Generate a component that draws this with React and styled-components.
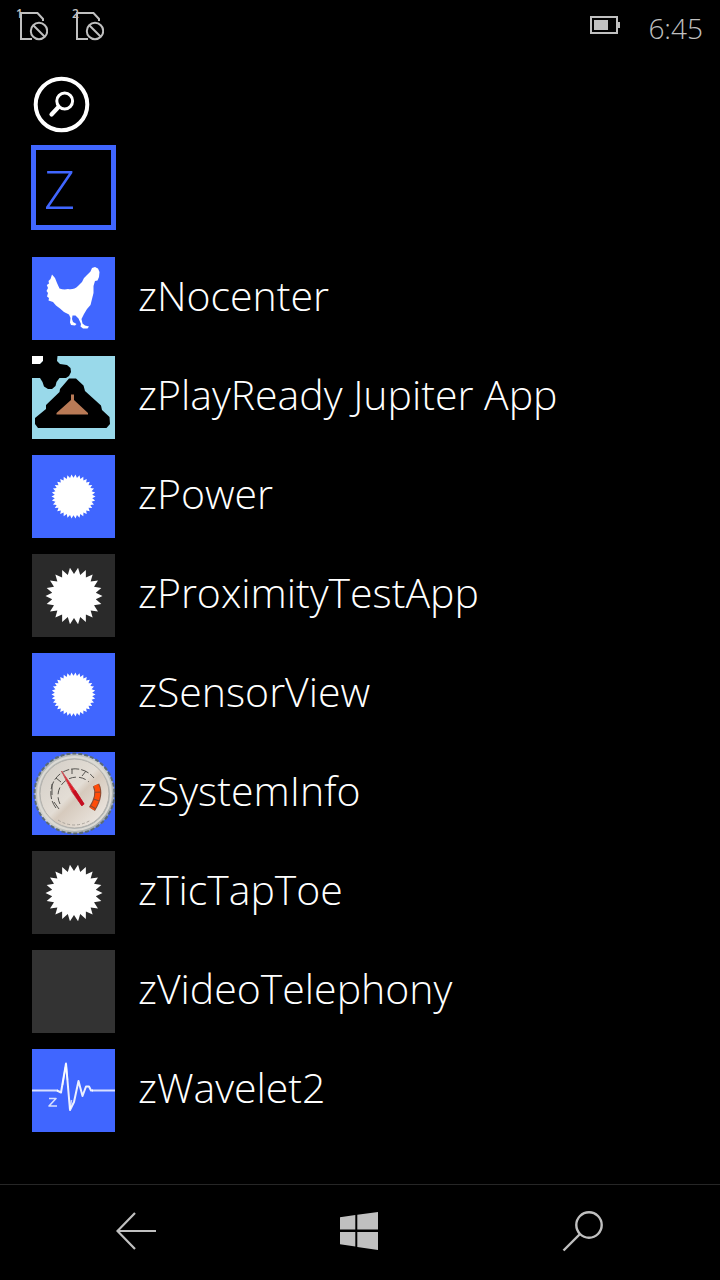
import React from "react";
import styled, { createGlobalStyle } from "styled-components";

const accent = "#4066ff";
const chrome = "#c0c0c0";

const GlobalStyle = createGlobalStyle`
  * { box-sizing: border-box; }
  body {
    margin: 0;
    background: #000;
    color: #fff;
    font-family: "Open Sans", "Noto Sans", sans-serif;
    font-weight: 340;
  }
  button {
    margin: 0;
    padding: 0;
    border: 0;
    background: none;
    color: inherit;
    font: inherit;
    cursor: pointer;
  }
  svg { display: block; }
`;

const Screen = styled.div`
  min-height: 100vh;
  display: flex;
  flex-direction: column;
`;

const StatusBar = styled.header`
  display: flex;
  align-items: flex-start;
  justify-content: space-between;
  height: 60px;
  padding: 8px 17px 0 16px;
  color: ${chrome};
`;

const StatusGroup = styled.div`
  display: flex;
  align-items: flex-start;
  gap: ${(p) => p.$gap}px;
`;

const Sim = styled.div`
  display: grid;
  width: 32px;
  height: 36px;
  > * { grid-area: 1 / 1; }
`;

const SimNumber = styled.span`
  font-size: 12px;
  line-height: 11px;
  font-weight: 600;
`;

const BatteryBox = styled.div`
  padding-top: 8px;
`;

const Clock = styled.time`
  font-size: 28px;
  line-height: 40px;
`;

const Main = styled.main`
  flex: 1;
  display: flex;
  flex-direction: column;
  align-items: flex-start;
  padding: 16px 32px 52px;
`;

const SearchButton = styled.button`
  width: 60px;
  height: 58px;
`;

const LetterButton = styled.button`
  width: 85px;
  height: 85px;
  margin: 11px 0 27px -1px;
  padding-left: 8px;
  border: 5px solid ${accent};
  color: ${accent};
  font-size: 54px;
  line-height: 76px;
  text-align: left;
`;

const AppList = styled.ul`
  display: flex;
  flex-direction: column;
  gap: 16px;
  width: 100%;
  margin: 0;
  padding: 0;
  list-style: none;
`;

const AppButton = styled.button`
  display: flex;
  align-items: center;
  gap: 23px;
  width: 100%;
  text-align: left;
`;

const Tile = styled.span`
  flex: none;
  width: 83px;
  height: 83px;
  background: ${(p) => p.$color};
`;

const AppName = styled.span`
  padding-bottom: 8px;
  font-size: 41px;
  line-height: 56px;
  white-space: nowrap;
`;

const NavBar = styled.nav`
  display: grid;
  grid-template-columns: 272px 1fr 274px;
  height: 96px;
  padding-bottom: 3px;
  border-top: 1px solid #262626;
  color: ${chrome};
`;

const NavButton = styled.button`
  display: flex;
  align-items: center;
  justify-content: center;
`;

function SimIcon({ number }) {
  return (
    <Sim>
      <svg width="32" height="36" viewBox="0 0 32 36" fill="none" stroke="currentColor" strokeWidth="2" aria-hidden="true">
        <path d="M16 31H5V5H21.500L27 11V13" />
        <circle cx="23" cy="23" r="8.200" />
        <path d="M17 17L29 29" />
      </svg>
      <SimNumber>{number}</SimNumber>
    </Sim>
  );
}

function Battery() {
  return (
    <svg width="30" height="18" viewBox="0 0 30 18" role="img" aria-label="Battery">
      <path d="M1 1H27V17H1Z" fill="none" stroke="currentColor" strokeWidth="2" />
      <path d="M4 4H18V14H4ZM28 6H30V12H28Z" fill="currentColor" />
    </svg>
  );
}

function burst(cx, cy, outer, inner, teeth) {
  const points = [];
  for (let i = 0; i < teeth * 2; i += 1) {
    const r = i % 2 ? outer : inner;
    const a = (i * Math.PI) / teeth - Math.PI / 2;
    points.push(`${(cx + r * Math.cos(a)).toFixed(2)},${(cy + r * Math.sin(a)).toFixed(2)}`);
  }
  return points.join(" ");
}

const Picture = ({ children }) => (
  <svg width="83" height="83" viewBox="0 0 83 83" aria-hidden="true">
    {children}
  </svg>
);

const Hen = () => (
  <Picture>
    <path
      fill="#fff"
      d="M20 17.500L23 21L25 26L27.500 31.500Q32 33 36 32Q42 33 46 29L50 25L52 21L55 18L58.500 14.500L60 11L63 10L66 11.500L67.500 15L67 20L65.500 23.500L63 24L61.500 29L61.500 36L60 42L58.500 48L55 52L52 57L49.500 62L50.500 66.500L53 68.500L57 69.500L55.500 71.500L51 71.500L48.500 69.500L49 67L46.500 61.500L43.500 58.500L40.500 58.500L40 62L41 65L44.500 67L43 68.500L39 68L38 65.500L38.500 61L37 57.500L32 55L28 51.500L24 48.500L21 45L16.500 43.500L17 41L15 39.500L16 36L14.500 34L16 31L14.800 28L17 26.500L16.500 24L18.500 22Z"
    />
  </Picture>
);

const Volcano = () => (
  <Picture>
    <path fill="#fff" d="M0 0H12L11 5L8 8L0 9Z" />
    <path
      d="M11 0H25.500L25 5L28 8L35 9L38.500 12L39 16L37 20L34 22H27.500L24.500 26L23.500 30L20 33H16L12 30.500L10.500 26L8 22H0V8H8L11 5Z"
    />
    <path
      d="M37 22.500H44L51.500 29.500L53 35L69 49.500L70 54L77.500 61L78 68L74.500 72H6L3 68V62L14 53V49L27.500 36L28 33Z"
    />
    <path fill="#b97a56" d="M39 38.500H42V44L56 57V58.500H24.500V57L39 44Z" />
  </Picture>
);

const SmallBurst = () => (
  <Picture>
    <polygon fill="#fff" points={burst(41.5, 41.5, 22, 18.8, 34)} />
  </Picture>
);

const LargeBurst = () => (
  <Picture>
    <polygon fill="#fff" points={burst(42, 42, 28.5, 22, 22)} />
  </Picture>
);

const Gauge = () => (
  <Picture>
    <defs>
      <linearGradient id="face" x1="0" y1="0" x2="1" y2="1">
        <stop offset="0" stopColor="#d2cdc6" />
        <stop offset="0.480" stopColor="#e3ddd5" />
        <stop offset="0.550" stopColor="#d6cabd" />
        <stop offset="1" stopColor="#f2efeb" />
      </linearGradient>
      <linearGradient id="rim" x1="0" y1="0" x2="1" y2="1">
        <stop offset="0" stopColor="#a9adae" />
        <stop offset="0.500" stopColor="#d4d4cf" />
        <stop offset="1" stopColor="#8d979c" />
      </linearGradient>
    </defs>
    <circle cx="42.500" cy="41.500" r="40" fill="url(#rim)" stroke="#596a78" strokeWidth="2" strokeDasharray="4 2" />
    <circle cx="42.500" cy="41.500" r="36.500" fill="none" stroke="#dcdad4" strokeWidth="2" />
    <circle cx="42.500" cy="41.500" r="34.500" fill="url(#face)" stroke="#b3b1ac" />
    <g fill="none" stroke="#55534f">
      <path d="M24 56A24 24 0 0 1 62 26" strokeDasharray="8 2" />
      <path d="M28 52A18.500 18.500 0 0 1 57 30" strokeDasharray="7 3" />
      <path d="M20 32V43M22 50L27 57M24 26L29 30M40 17V22M54 19L50 24" />
      <path d="M26 68Q42 78 59 68" stroke="#aaa49c" strokeDasharray="3 2" />
    </g>
    <path d="M64 33Q69 43 60 57" fill="none" stroke="#8b4a33" strokeWidth="7" />
    <path d="M64 33Q69 43 60 57" fill="none" stroke="#ff4b08" strokeWidth="5" strokeDasharray="7 1" />
    <path d="M29.500 19L43 38L52 52L50 54L40 40Z" fill="#df1824" stroke="#c9545a" />
    <path d="M42 39L51 53" stroke="#c50d20" strokeWidth="3.500" />
  </Picture>
);

const Wave = () => (
  <Picture>
    <g fill="none" stroke="#fff" strokeLinejoin="round">
      <path d="M0 41.500H26M60 41.500H83" strokeWidth="2" opacity="0.800" />
      <path
        d="M25 41.500L29 43.500L34 14.500L38 61L42 53L46.500 32L50.500 47L54 37.500H57L59 41.500H61"
        strokeWidth="2"
        opacity="0.900"
      />
      <path d="M34 15L35.500 31M30.500 36L33.500 18M38 60L39.500 51" strokeWidth="1.600" opacity="0.700" />
      <path d="M17 49.500H24L17 57H25" strokeWidth="1.600" opacity="0.800" />
    </g>
  </Picture>
);

const apps = [
  { name: "zNocenter", color: accent, Art: Hen },
  { name: "zPlayReady Jupiter App", color: "#99d9ea", Art: Volcano },
  { name: "zPower", color: accent, Art: SmallBurst },
  { name: "zProximityTestApp", color: "#2a2a2a", Art: LargeBurst },
  { name: "zSensorView", color: accent, Art: SmallBurst },
  { name: "zSystemInfo", color: accent, Art: Gauge },
  { name: "zTicTapToe", color: "#2a2a2a", Art: LargeBurst },
  { name: "zVideoTelephony", color: "#333333" },
  { name: "zWavelet2", color: accent, Art: Wave },
];

export default function App() {
  return (
    <Screen>
      <GlobalStyle />
      <StatusBar>
        <StatusGroup $gap={24}>
          <SimIcon number="1" />
          <SimIcon number="2" />
        </StatusGroup>
        <StatusGroup $gap={28}>
          <BatteryBox>
            <Battery />
          </BatteryBox>
          <Clock>6:45</Clock>
        </StatusGroup>
      </StatusBar>
      <Main>
        <SearchButton aria-label="Search apps">
          <svg width="60" height="58" viewBox="0 0 60 58" fill="none" stroke="#fff" aria-hidden="true">
            <circle cx="29.500" cy="28.500" r="25.800" strokeWidth="4" />
            <circle cx="32.700" cy="25" r="7.900" strokeWidth="3" />
            <path d="M26.500 31L19.500 38.500" strokeWidth="4.200" strokeLinecap="round" />
          </svg>
        </SearchButton>
        <LetterButton>Z</LetterButton>
        <AppList>
          {apps.map(({ name, color, Art }) => (
            <li key={name}>
              <AppButton>
                <Tile $color={color}>{Art && <Art />}</Tile>
                <AppName>{name}</AppName>
              </AppButton>
            </li>
          ))}
        </AppList>
      </Main>
      <NavBar>
        <NavButton aria-label="Back">
          <svg width="40" height="38" viewBox="0 0 40 38" fill="none" stroke="currentColor" strokeWidth="2.200" aria-hidden="true">
            <path d="M19 1L1.500 19L19 37M1.500 19H40" />
          </svg>
        </NavButton>
        <NavButton aria-label="Start">
          <svg width="38" height="38" viewBox="0 0 38 38" fill="currentColor" aria-hidden="true">
            <path d="M0 5.200L15.300 3V17.500H0ZM17.300 2.700L38 0V17.500H17.300ZM0 20H15.300V34.500L0 32.200ZM17.300 20H38V38L17.300 34.900Z" />
          </svg>
        </NavButton>
        <NavButton aria-label="Search">
          <svg width="42" height="42" viewBox="0 0 42 42" fill="none" stroke="currentColor" aria-hidden="true">
            <circle cx="27" cy="15" r="12.700" strokeWidth="2.400" />
            <path d="M18 24L1.500 40.500" strokeWidth="2.400" />
          </svg>
        </NavButton>
      </NavBar>
    </Screen>
  );
}
